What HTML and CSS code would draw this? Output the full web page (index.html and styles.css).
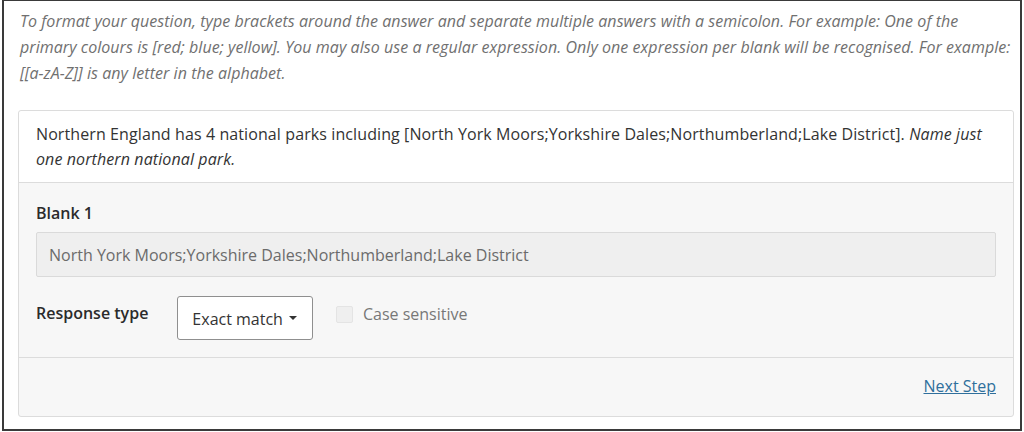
FILE: index.html
```html
<!DOCTYPE html>
<html lang="en">
<head>
<meta charset="utf-8">
<title>Fill in the blank</title>
<link rel="stylesheet" href="styles.css">
</head>
<body>
<div class="frame">
  <p class="hint">To format your question, type brackets around the answer and separate multiple answers with a semicolon. For example: One of the primary colours is [red; blue; yellow]. You may also use a regular expression. Only one expression per blank will be recognised. For example: [[a-zA-Z]] is any letter in the alphabet.</p>
  <div class="card">
    <div class="card-head">Northern England has 4 national parks including [North York Moors;Yorkshire Dales;Northumberland;Lake District]. <em>Name just one northern national park.</em></div>
    <div class="card-body">
      <div class="label">Blank 1</div>
      <div class="answer">North York Moors;Yorkshire Dales;Northumberland;Lake District</div>
      <div class="resp-row">
        <span class="label">Response type</span>
        <button class="dropdown" type="button">Exact match <span class="caret"></span></button>
        <label class="check"><span class="box"></span>Case sensitive</label>
      </div>
    </div>
    <div class="card-foot"><a href="#" class="next">Next Step</a></div>
  </div>
</div>
</body>
</html>
```
FILE: styles.css
```css
html, body {
  margin: 0;
  padding: 0;
  background: #fff;
}
body {
  font-family: "Open Sans", "Noto Sans", sans-serif;
  color: #333;
}
.frame {
  box-sizing: border-box;
  width: 1020px;
  height: 431px;
  margin-left: 2px;
  border: 1px solid #3a3a3a;
  border-width: 1px 2px 2px 2px;
  padding: 7px 6px 0 14px;
}
.hint {
  margin: 0;
  padding-left: 2px;
  font-style: italic;
  font-size: 16px;
  letter-spacing: 0.05px;
  line-height: 26px;
  color: #707070;
}
.card {
  margin-top: 24px;
  border: 1px solid #dcdcdc;
  border-radius: 3px;
  background: #f7f7f7;
}
.card-head {
  background: #fff;
  padding: 11px 17px 10px;
  font-size: 16px;
  letter-spacing: 0.1px;
  line-height: 25px;
  color: #333;
  border-bottom: 1px solid #dcdcdc;
  border-radius: 3px 3px 0 0;
}
.card-body {
  padding: 19px 17px 17px;
  border-bottom: 1px solid #dcdcdc;
}
.label {
  font-size: 16px;
  font-weight: 600;
  color: #2b2b2b;
  line-height: 22px;
}
.answer {
  margin-top: 8px;
  height: 45px;
  box-sizing: border-box;
  background: #efefef;
  border: 1px solid #dadada;
  border-radius: 2px;
  padding: 0 12px;
  display: flex;
  align-items: center;
  font-size: 16px;
  color: #6b6b6b;
}
.resp-row {
  margin-top: 19px;
  display: flex;
  align-items: flex-start;
}
.resp-row .label {
  margin-top: 6px;
}
.dropdown {
  margin-left: 29px;
  height: 44px;
  padding: 1px 15px 0 14px;
  background: #fff;
  border: 1px solid #8f8f8f;
  border-radius: 3px;
  font-family: inherit;
  font-size: 16px;
  color: #333;
  display: flex;
  align-items: center;
  gap: 6px;
}
.caret {
  width: 0;
  height: 0;
  border-left: 4px solid transparent;
  border-right: 4px solid transparent;
  border-top: 4px solid #333;
  margin-top: -1px;
}
.check {
  margin-left: 23px;
  margin-top: 7px;
  display: flex;
  align-items: center;
  gap: 10px;
  font-size: 16px;
  color: #777;
}
.box {
  width: 17px;
  height: 17px;
  box-sizing: border-box;
  border: 1px solid #e4e4e4;
  background: #efefef;
  border-radius: 2px;
}
.card-foot {
  height: 58px;
  padding: 0 17px 20px;
  display: flex;
  justify-content: flex-end;
  align-items: flex-end;
  box-sizing: border-box;
}
.next {
  font-size: 16px;
  color: #2f6f9c;
  text-decoration: underline;
  line-height: 20px;
}
```
